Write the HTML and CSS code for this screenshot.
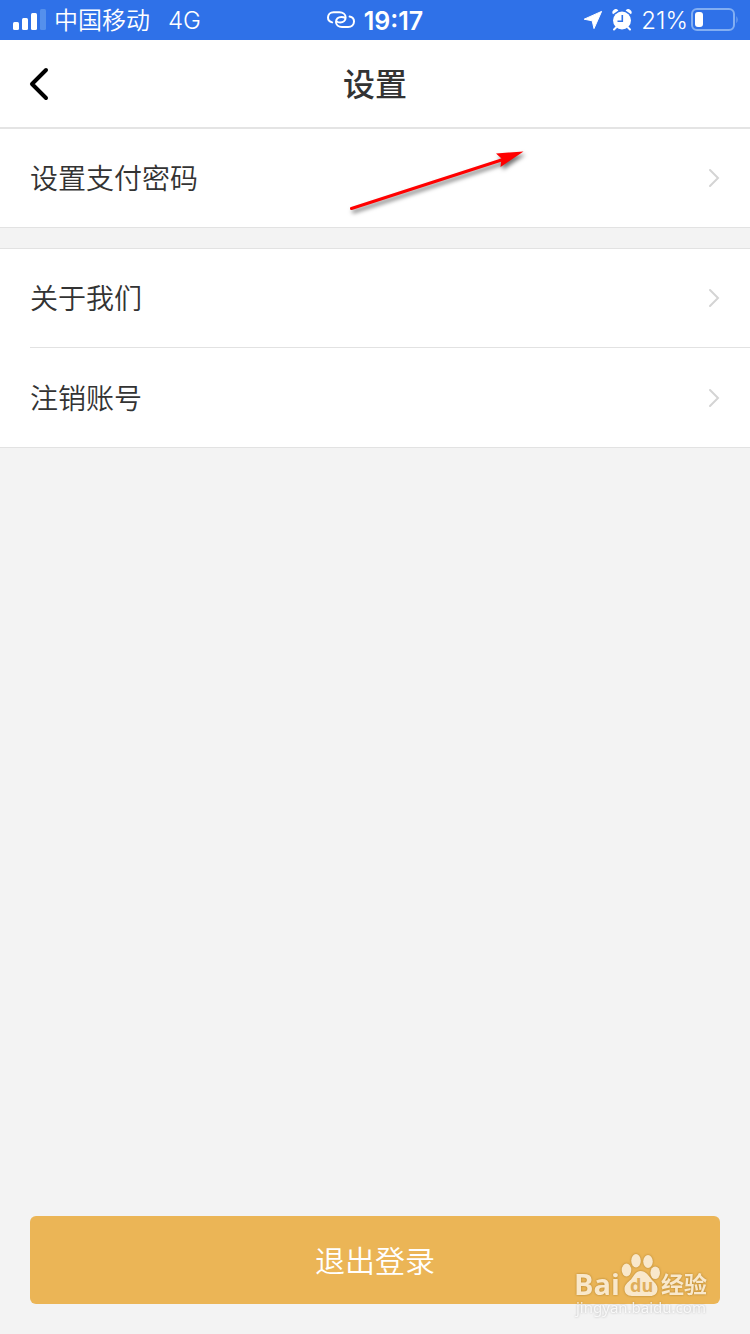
FILE: index.html
```html
<!DOCTYPE html>
<html lang="zh-CN">
<head>
<meta charset="utf-8">
<meta name="viewport" content="width=device-width, initial-scale=1">
<title>设置</title>
<link rel="stylesheet" href="styles.css">
</head>
<body>
<div class="screen">
  <div class="status">
    <div class="status-left">
      <svg class="signal" width="34" height="22" viewBox="0 0 34 22" fill="#fff" aria-hidden="true">
        <rect x="0" y="13" width="6" height="8" rx="1.5"/>
        <rect x="9" y="9" width="6" height="12" rx="1.5"/>
        <rect x="18" y="4" width="6" height="17" rx="1.5"/>
        <rect x="27" y="0" width="6" height="21" rx="1.5" fill="#5590ec"/>
      </svg>
      <span class="carrier">中国移动</span>
      <span class="network">4G</span>
    </div>
    <div class="status-center">
      <svg width="28" height="18" viewBox="0 0 28 18" fill="none" stroke="#fff" stroke-width="2" stroke-linecap="round" aria-hidden="true">
        <path d="M5.2 11.4 C2.6 10.8 1 9 1 6.6 C1 3.4 3.4 1.2 6.6 1.2 H12.4 C16 1.2 18.6 3.4 18.6 6.4 C18.6 9.4 16.4 11.4 13.2 11.4 C11.4 11.4 10.6 11.2 10 10.6"/>
        <path d="M22.6 5.6 C25.3 6.1 27 8 27 10.6 C27 13.8 24.5 16 21.2 16 H15 C11.4 16 9 13.8 9 11 C9 8 11.3 5.9 14.4 5.9 C16 5.9 17 6.2 17.8 6.8"/>
      </svg>
      <span class="time">19:17</span>
    </div>
    <div class="status-right">
      <svg width="20" height="20" viewBox="0 0 20 20" fill="#fff" stroke="#fff" stroke-linejoin="round" aria-hidden="true"><path d="M18.6 1.4 L1.2 9.2 L9.2 10.8 L11 18.6 Z"/></svg>
      <svg class="alarm" width="20" height="22" viewBox="0 0 20 22" fill="none" aria-hidden="true">
        <circle cx="10" cy="11.5" r="9" fill="#fff"/>
        <path d="M4 18.5 L2 20.5 M16 18.5 L18 20.5" stroke="#fff" stroke-width="2" stroke-linecap="round"/>
        <path d="M1 5.2 A3.2 3.2 0 0 1 6.4 1.6 Z M19 5.2 A3.2 3.2 0 0 0 13.6 1.6 Z" fill="#fff"/>
        <path d="M10.3 6 V12.3 H5.5" stroke="#2f71e8" stroke-width="1.6"/>
      </svg>
      <span class="percent">21%</span>
      <svg class="battery" width="49" height="24" viewBox="0 0 49 24" aria-hidden="true">
        <rect x="2" y="1" width="42" height="21" rx="5" fill="none" stroke="#82aef2" stroke-width="2"/>
        <path d="M46.5 8 Q48.6 11.5 46.5 15.5 Z" fill="#82aef2"/>
        <rect x="5" y="4" width="8" height="15" rx="3" fill="#fff"/>
      </svg>
    </div>
  </div>

  <header class="navbar">
    <button class="back" type="button" aria-label="返回">
      <svg width="20" height="34" viewBox="0 0 20 34" fill="none" stroke="#000" stroke-width="4" stroke-linecap="round" stroke-linejoin="round" aria-hidden="true"><path d="M17 3 L3 17 L17 31"/></svg>
    </button>
    <h1 class="title">设置</h1>
  </header>

  <main class="content">
    <nav class="group group-first">
      <a class="row" href="#password"><span>设置支付密码</span>
        <svg class="chevron" width="12" height="20" viewBox="0 0 12 20" aria-hidden="true"><path d="M2 2 L10 10 L2 18"/></svg></a>
      <svg class="pointer" width="190" height="76" viewBox="0 0 190 76" aria-hidden="true">
        <path d="M11.5 52.5 L163 3.5" stroke="#f00" stroke-width="3" stroke-linecap="round"/>
        <path d="M183.5 -4.5 L156 -2.5 L161.5 2.5 L160.5 11 Z" fill="#f00"/>
      </svg>
    </nav>
    <nav class="group">
      <a class="row" href="#about"><span>关于我们</span>
        <svg class="chevron" width="12" height="20" viewBox="0 0 12 20" aria-hidden="true"><path d="M2 2 L10 10 L2 18"/></svg></a>
      <a class="row" href="#close-account"><span>注销账号</span>
        <svg class="chevron" width="12" height="20" viewBox="0 0 12 20" aria-hidden="true"><path d="M2 2 L10 10 L2 18"/></svg></a>
    </nav>
  </main>

  <footer class="footer">
    <button class="logout" type="button">退出登录</button>
    <svg class="watermark" width="150" height="70" viewBox="0 0 150 70" role="img" aria-label="Baidu 经验">
      <g class="mark">
        <text class="mark-latin" x="4" y="45">Bai</text>
        <ellipse cx="56.5" cy="20" rx="4.8" ry="6.4"/>
        <ellipse cx="66" cy="10.8" rx="4.8" ry="6.8"/>
        <ellipse cx="78" cy="11.5" rx="4.8" ry="6.5"/>
        <ellipse cx="85.2" cy="22.8" rx="4.8" ry="6.3"/>
        <path d="M70.5 21 C76 21 78.5 25.5 82 30 C86 33.5 87.5 36 87.5 39 C87.5 43.5 84.5 46 80 46 H62 C57 46 54.5 43 54.5 39 C54.5 35 57.5 32.5 61 29.5 C64.5 25 66 21 70.5 21 Z"/>
        <text class="mark-cjk" x="91" y="43">经验</text>
      </g>
      <text class="mark-du" x="60" y="42">du</text>
      <text class="mark-url" x="6" y="63">jingyan.baidu.com</text>
    </svg>
  </footer>
</div>
</body>
</html>
```
FILE: styles.css
```css
* {
  box-sizing: border-box;
}

body {
  margin: 0;
  background: #f3f3f3;
  color: #333;
  font-family: Inter, "Noto Sans CJK SC", sans-serif;
}

svg {
  display: block;
  flex: none;
}

.screen {
  display: flex;
  flex-direction: column;
  min-height: 100vh;
}

.status {
  display: grid;
  grid-template-columns: 1fr auto 1fr;
  align-items: center;
  height: 40px;
  background: #2f71e8;
  color: #fff;
  font-size: 24px;
  line-height: 40px;
}

.status span {
  padding-top: 2px;
}

.status-left,
.status-center,
.status-right {
  display: flex;
  align-items: center;
  height: 40px;
}

.status-left {
  padding-left: 13px;
}

.carrier {
  margin-left: 7px;
  font-weight: 350;
}

.network {
  margin-left: 18px;
  font-weight: 300;
}

.status-center {
  gap: 9px;
}

.time {
  font-size: 25px;
  font-weight: 600;
}

.status-right {
  justify-content: flex-end;
  padding-right: 11px;
}

.alarm {
  margin: 0 9px;
}

.percent {
  font-weight: 300;
}

.battery {
  margin-left: 2px;
}

.navbar {
  display: grid;
  grid-template-columns: 90px 1fr 90px;
  align-items: center;
  height: 89px;
  border-bottom: 2px solid #e4e4e4;
  background: #fff;
}

.back {
  display: flex;
  align-items: center;
  height: 87px;
  padding: 0 0 0 29px;
  border: 0;
  background: none;
  cursor: pointer;
}

.title {
  margin: 0;
  padding-top: 2px;
  font-size: 32px;
  font-weight: 500;
  line-height: 48px;
  text-align: center;
}

.content {
  display: flex;
  flex: 1;
  flex-direction: column;
  gap: 20px;
}

.group {
  position: relative;
  border-top: 1px solid #e2e2e2;
  border-bottom: 1px solid #e2e2e2;
  background: #fff;
}

.group-first {
  border-top: 0;
}

.row {
  display: flex;
  align-items: center;
  justify-content: space-between;
  height: 98px;
  margin-left: 30px;
  padding-right: 30px;
  color: #333;
  font-size: 28px;
  font-weight: 350;
  text-decoration: none;
}

.row span {
  padding-bottom: 2px;
}

.row + .row {
  height: 100px;
  border-top: 1px solid #e2e2e2;
}

.chevron {
  fill: none;
  stroke: #d4d4d4;
  stroke-width: 2;
  stroke-linecap: round;
}

.pointer {
  position: absolute;
  top: 27px;
  left: 340px;
  overflow: visible;
  filter: drop-shadow(2px 3px 2px rgb(0 0 0 / 55%));
  pointer-events: none;
}

.footer {
  position: relative;
  padding: 30px;
}

.logout {
  display: block;
  width: 100%;
  height: 88px;
  padding: 0 0 2px;
  border: 0;
  border-radius: 6px;
  background: #ebb556;
  color: #fff;
  font-family: inherit;
  font-size: 30px;
  font-weight: 350;
  cursor: pointer;
}

.watermark {
  position: absolute;
  right: 30px;
  bottom: 14px;
  pointer-events: none;
}

.mark {
  fill: #f9e8cb;
  filter: drop-shadow(0 0 1px rgb(120 80 10 / 50%));
}

.mark-latin {
  font: 700 29px "Open Sans", sans-serif;
}

.mark-cjk {
  font: 700 23px "Noto Sans CJK SC", sans-serif;
}

.mark-du {
  fill: #dfae5c;
  font: 700 18px "Open Sans", sans-serif;
}

.mark-url {
  fill: #fff;
  fill-opacity: 0.8;
  font: 400 15px "Noto Sans", sans-serif;
  filter: drop-shadow(0 0 1px rgb(0 0 0 / 30%));
}
```
